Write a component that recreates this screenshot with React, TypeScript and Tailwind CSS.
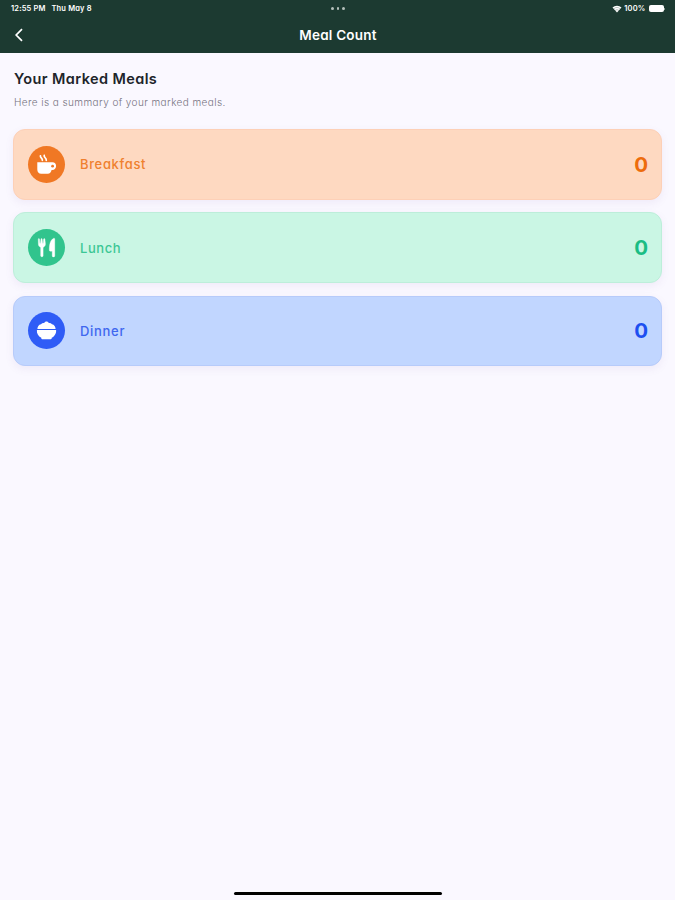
import React from "react";

function CupIcon() {
  return (
    <svg viewBox="0 0 37 37" className="size-full" fill="none">
      <path
        d="M9.3 16.2h15.2c2.2 0 3.6 1.6 3.6 3.8s-1.5 4-3.7 4h-.8c-.6 2.4-1.7 3.8-3.8 3.8h-6.6c-2.5 0-3.9-1.7-3.9-4.3z"
        fill="white"
      />
      <circle cx="24.6" cy="20.2" r="1.4" fill="#f07824" />
      <path
        d="M12.4 9.8c-.5 2 2.2 2 2 4.5M16.2 9.4c-.6 2.2 2.4 2.4 2.1 4.9"
        stroke="white"
        strokeWidth="1.7"
        strokeLinecap="round"
      />
    </svg>
  );
}

function CutleryIcon() {
  return (
    <svg viewBox="0 0 37 37" className="size-full" fill="none">
      <path
        d="M10.3 10.2c0-.8 1.1-.8 1.2 0l.3 4h.7l.5-4.2c.1-.7 1-.7 1.1 0l.5 4.2h.7l.3-4c.1-.8 1.2-.8 1.3 0l.5 4.6c.1 1.9-.9 3-2.3 3.6v8.4c0 1.3-2.4 1.3-2.4 0v-8.4c-1.5-.6-2.4-1.8-2.3-3.6z"
        fill="white"
        stroke="white"
        strokeWidth=".4"
      />
      <path
        d="M26.8 9.9v17c0 1.4-2.6 1.4-2.6 0v-4.7h-1.6c-.8 0-1.3-.5-1.3-1.3 0-5.5.9-10 4.5-11.7.6-.2 1 .1 1 .7z"
        fill="white"
        stroke="white"
        strokeWidth=".3"
      />
    </svg>
  );
}

function BowlIcon() {
  return (
    <svg viewBox="0 0 37 37" className="size-full" fill="none">
      <path
        d="M9.4 17c0-2.3 1.3-4.4 3.6-4.8.8-1 2-1.4 3.3-1.2.4-2 3.9-2 4.4 0 1.3-.2 2.5.2 3.3 1.2 2.2.4 3.6 2.5 3.6 4.8z"
        fill="white"
      />
      <path
        d="M8.9 18h19.2c.4 3.3-1.5 6.3-4.4 7.8v.5c0 .5-.4.9-.9.9h-8.6c-.5 0-.9-.4-.9-.9v-.5c-3-1.5-4.8-4.5-4.4-7.8z"
        fill="white"
      />
    </svg>
  );
}

type Meal = {
  name: string;
  count: number;
  card: string;
  disc: string;
  label: string;
  number: string;
  Icon: () => React.JSX.Element;
};

const meals: Meal[] = [
  {
    name: "Breakfast",
    count: 0,
    card: "bg-[#fed9c1] border-[#fdd0b7]",
    disc: "bg-[#f07824]",
    label: "text-[#ef802e] tracking-[0.65px]",
    number: "text-[#ed6c0c]",
    Icon: CupIcon,
  },
  {
    name: "Lunch",
    count: 0,
    card: "bg-[#caf6e4] border-[#bdeeda]",
    disc: "bg-[#31c48d]",
    label: "text-[#3bc795] tracking-[0.55px]",
    number: "text-[#1bbd84]",
    Icon: CutleryIcon,
  },
  {
    name: "Dinner",
    count: 0,
    card: "bg-[#c1d6ff] border-[#b7cbfa]",
    disc: "bg-[#2f5cf6]",
    label: "text-[#4067ef] tracking-[0.7px]",
    number: "text-[#1d4ff0]",
    Icon: BowlIcon,
  },
];

function StatusBar() {
  return (
    <div className="grid h-[17px] grid-cols-3 items-center pl-[11px] pr-[10px] text-[7.5px] font-semibold leading-none">
      <div className="flex gap-[6px] whitespace-nowrap tracking-[0.15px]">
        <span>12:55 PM</span>
        <span>Thu May 8</span>
      </div>
      <div className="flex justify-center gap-[3px]">
        <span className="size-[2.5px] rounded-full bg-[#b4c0bb]" />
        <span className="size-[2.5px] rounded-full bg-[#b4c0bb]" />
        <span className="size-[2.5px] rounded-full bg-[#b4c0bb]" />
      </div>
      <div className="flex items-center justify-end">
        <svg viewBox="0 0 10 8" className="h-[8px] w-[10px]">
          <path d="M.5 2.6a6.5 6.5 0 0 1 9 0L5 7.6z" fill="white" />
          <path d="M1.6 4a5 5 0 0 1 6.8 0M3 5.5a3 3 0 0 1 4 0" stroke="#1c3a31" strokeWidth=".3" fill="none" />
        </svg>
        <span className="ml-[2px] mr-[3px] tracking-[0.15px]">100%</span>
        <span className="h-[7px] w-[15px] rounded-[2px] bg-white" />
        <span className="ml-[0.5px] h-[2px] w-[1px] bg-[#8b9c95]" />
      </div>
    </div>
  );
}

function MealCard({ meal }: { meal: Meal }) {
  return (
    <li
      className={`flex h-[70.5px] items-center rounded-[12px] border pl-[13.5px] pr-[13px] shadow-[0_3px_8px_rgba(110,80,160,0.08)] ${meal.card}`}
    >
      <span className={`size-[37px] rounded-full ${meal.disc}`}>
        <meal.Icon />
      </span>
      <span className={`ml-[15.5px] text-[13px] font-medium leading-5 ${meal.label}`}>{meal.name}</span>
      <span className={`ml-auto pt-px text-[20.5px] font-bold leading-6 ${meal.number}`}>{meal.count}</span>
    </li>
  );
}

export default function App() {
  return (
    <div className="flex h-[900px] w-[675px] flex-col overflow-hidden bg-[#faf8ff] font-['Inter',sans-serif] [font-feature-settings:'cv11']">
      <header className="h-[53px] bg-[#1c3a31] text-white">
        <StatusBar />
        <div className="grid h-[36px] grid-cols-3 items-center pl-[14px] pr-[13px]">
          <svg viewBox="0 0 10 14" className="h-[14px] w-[10px]" fill="none">
            <path d="M8 1.2 2.2 7 8 12.8" stroke="white" strokeWidth="1.7" />
          </svg>
          <h1 className="text-center text-[13.5px] font-semibold leading-5 tracking-[0.2px]">Meal Count</h1>
        </div>
      </header>
      <main className="flex-1 px-[13px] pt-[16px]">
        <h2 className="pl-px text-[14.5px] font-semibold leading-5 tracking-[0.4px] text-[#20242a]">Your Marked Meals</h2>
        <p className="mt-[5px] pl-px text-[10px] font-light leading-4 tracking-[0.41px] text-[#77747f]">
          Here is a summary of your marked meals.
        </p>
        <ul className="mt-[19px] flex flex-col gap-[12.75px]">
          {meals.map((meal) => (
            <MealCard key={meal.name} meal={meal} />
          ))}
        </ul>
      </main>
      <div className="mb-[5px] ml-[234px] h-[3px] w-[208px] rounded-full bg-black" />
    </div>
  );
}
